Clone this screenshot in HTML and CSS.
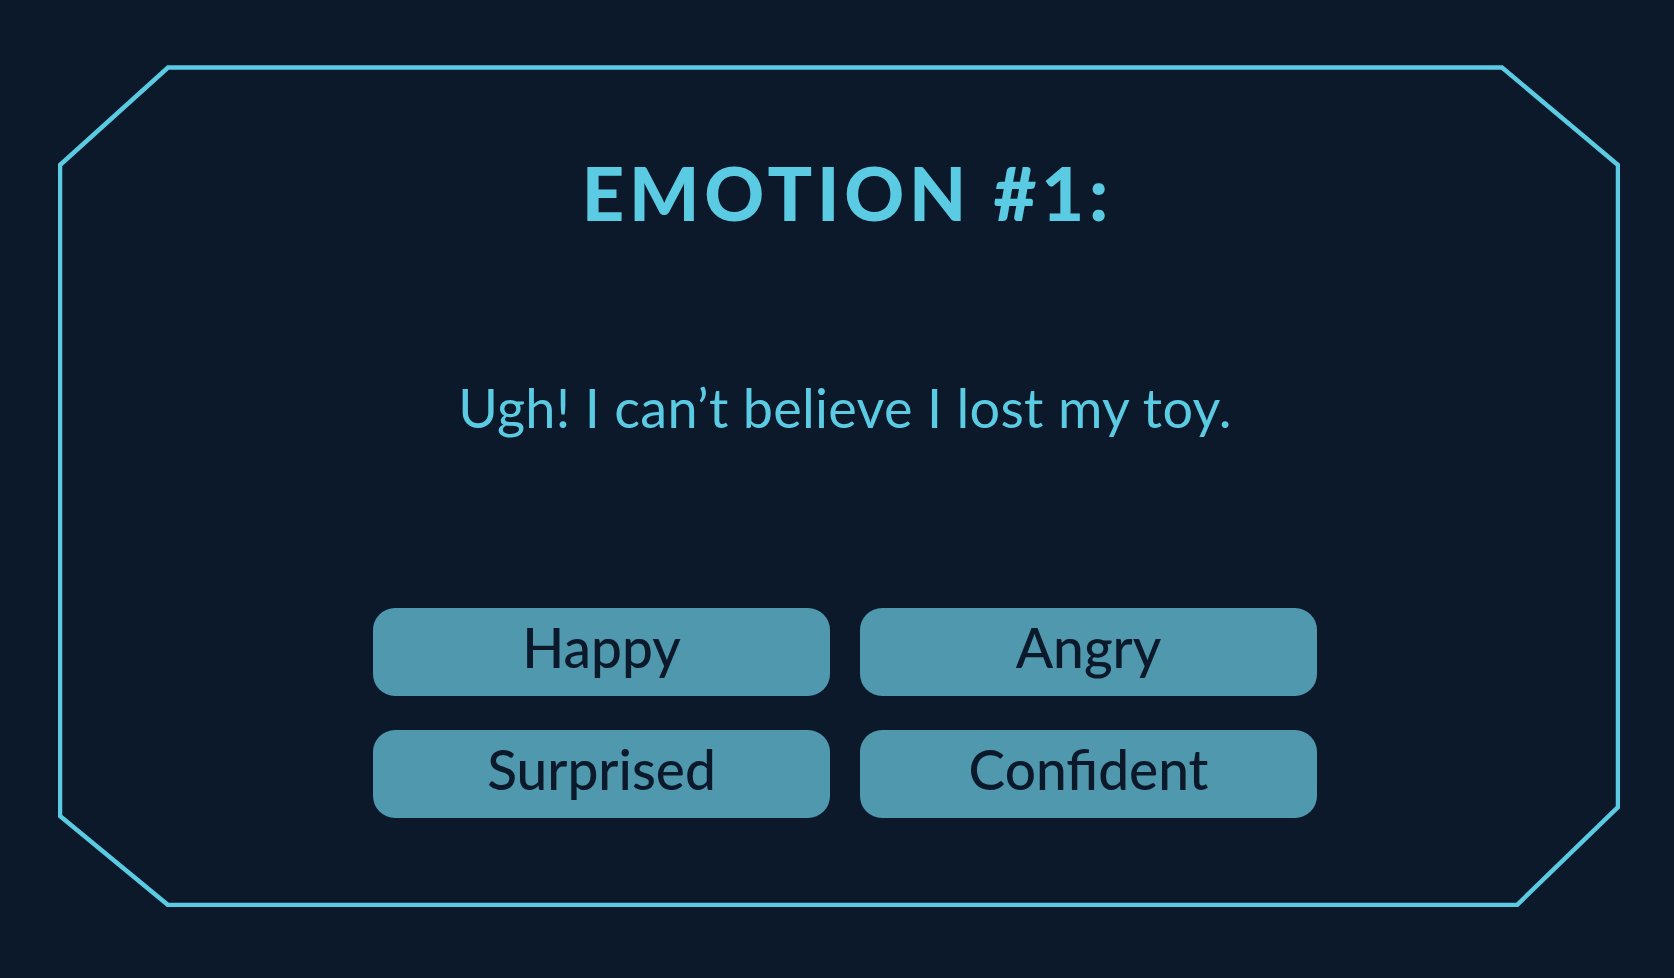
FILE: index.html
```html
<!DOCTYPE html>
<html lang="en">
<head>
<meta charset="utf-8">
<title>Emotion #1</title>
<link rel="stylesheet" href="styles.css">
</head>
<body>
<main class="stage">
  <section class="card">
    <svg class="frame" viewBox="0 0 1562 842" aria-hidden="true">
      <polygon points="110,2.5 1444,2.5 1560,100 1560,742 1459,840 110,840 2,751 2,100" fill="none" stroke="#5acbe2" stroke-width="4.5" stroke-linejoin="miter"/>
    </svg>
    <h1 class="title">EMOTION #1:</h1>
    <p class="prompt">Ugh! I can’t believe I lost my toy.</p>
    <div class="choices">
      <button class="choice">Happy</button>
      <button class="choice">Angry</button>
      <button class="choice">Surprised</button>
      <button class="choice">Confident</button>
    </div>
  </section>
</main>
</body>
</html>
```

FILE: styles.css
```css
html, body {
  margin: 0;
  padding: 0;
  background: #0b192b;
}
body {
  width: 1674px;
  height: 978px;
  overflow: hidden;
  font-family: "Lato", "Liberation Sans", sans-serif;
}
.stage {
  display: flex;
  padding: 65px 0 0 58px;
}
.card {
  position: relative;
  width: 1562px;
  height: 842px;
  display: flex;
  flex-direction: column;
  align-items: center;
  padding: 91px 0 0 12px;
  box-sizing: border-box;
}
.frame {
  position: absolute;
  left: 0;
  top: 0;
  width: 1562px;
  height: 842px;
}
.title {
  margin: 0;
  font-size: 74px;
  line-height: 1;
  font-weight: 900;
  letter-spacing: 0.065em;
  color: #5acbe2;
  padding-left: 0.065em;
}
.prompt {
  margin: 151px 0 0;
  font-size: 54px;
  line-height: 1;
  font-weight: 400;
  letter-spacing: 0.3px;
  color: #5acbe2;
}
.choices {
  margin-top: 173px;
  display: grid;
  grid-template-columns: 457px 457px;
  column-gap: 30px;
  row-gap: 34px;
}
.choice {
  height: 88px;
  border: none;
  border-radius: 22px;
  background: #4f98ad;
  color: #0b192b;
  font-family: "Lato", "Liberation Sans", sans-serif;
  font-size: 55px;
  font-weight: 500;
  line-height: 1;
  padding: 0 0 10px;
  display: flex;
  align-items: center;
  justify-content: center;
}
```
